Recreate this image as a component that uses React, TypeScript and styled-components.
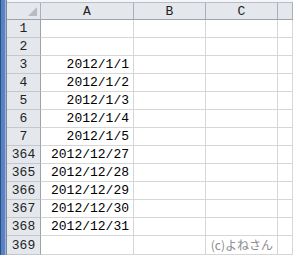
import React from "react";
import styled, { createGlobalStyle } from "styled-components";

const Global = createGlobalStyle`
  html, body { margin: 0; padding: 0; background: #ffffff; }
  body { width: 293px; height: 255px; overflow: hidden; }
  * { box-sizing: border-box; }
`;

const Frame = styled.div`
  display: flex;
  width: 293px;
  height: 255px;
  overflow: hidden;
  background: #ffffff;
`;

const BlueBar = styled.div`
  width: 7px;
  flex: none;
  background: linear-gradient(to right, #2c4f8c 0, #2c4f8c 1px, #5680c0 1px, #5a84c4 5px, #9db5da 5px, #9db5da 6px, #7d8796 6px);
`;

const Sheet = styled.div`
  flex: 1;
  display: flex;
  flex-direction: column;
  min-width: 0;
`;

const TopStrip = styled.div`
  height: 3px;
  background: #f3f5f8;
  border-bottom: 1px solid #b9bec6;
`;

const COLS = "34px 93px 72px 72px 1fr";

const HeaderRow = styled.div`
  display: grid;
  grid-template-columns: ${COLS};
  height: 17px;
`;

const ColHead = styled.div`
  background: #e4e7ec;
  border-right: 1px solid #a9b0ba;
  border-bottom: 1px solid #9da3ab;
  display: flex;
  align-items: center;
  justify-content: center;
  font-family: "Liberation Mono", monospace;
  font-size: 13px;
  color: #222;
  padding-top: 1px;
`;

const Corner = styled(ColHead)`
  position: relative;
  justify-content: flex-end;
  align-items: flex-end;
  padding: 0 3px 3px 0;
`;

const Row = styled.div`
  display: grid;
  grid-template-columns: ${COLS};
  height: 18px;
`;

const RowHead = styled.div`
  background: #e4e7ec;
  border-right: 1px solid #9da3ab;
  border-bottom: 1px solid #c3c8cf;
  display: flex;
  align-items: flex-end;
  justify-content: center;
  padding-bottom: 1px;
  font-family: "Liberation Mono", monospace;
  font-size: 13px;
  color: #222;
`;

const Cell = styled.div<{ $muted?: boolean }>`
  border-right: 1px solid #d6d6d6;
  border-bottom: 1px solid #d6d6d6;
  display: flex;
  align-items: flex-end;
  justify-content: flex-end;
  padding: 0 4px 1px 0;
  font-family: ${(p) => (p.$muted ? `"Noto Sans CJK JP", sans-serif` : `"Liberation Mono", monospace`)};
  font-size: ${(p) => (p.$muted ? "12px" : "13px")};
  color: ${(p) => (p.$muted ? "#8a8a8a" : "#000")};
  white-space: nowrap;
  overflow: visible;
`;

const rows: { n: string; a: string; c?: string }[] = [
  { n: "1", a: "" },
  { n: "2", a: "" },
  { n: "3", a: "2012/1/1" },
  { n: "4", a: "2012/1/2" },
  { n: "5", a: "2012/1/3" },
  { n: "6", a: "2012/1/4" },
  { n: "7", a: "2012/1/5" },
  { n: "364", a: "2012/12/27" },
  { n: "365", a: "2012/12/28" },
  { n: "366", a: "2012/12/29" },
  { n: "367", a: "2012/12/30" },
  { n: "368", a: "2012/12/31" },
  { n: "369", a: "", c: "(c)よねさん" },
];

export default function App() {
  return (
    <>
      <Global />
      <Frame>
        <BlueBar />
        <Sheet>
          <TopStrip />
          <HeaderRow>
            <Corner>
              <svg width="9" height="9" viewBox="0 0 9 9">
                <polygon points="9,0 9,9 0,9" fill="#b7bcc4" />
              </svg>
            </Corner>
            <ColHead>A</ColHead>
            <ColHead>B</ColHead>
            <ColHead>C</ColHead>
            <ColHead />
          </HeaderRow>
          {rows.map((r) => (
            <Row key={r.n}>
              <RowHead>{r.n}</RowHead>
              <Cell>{r.a}</Cell>
              <Cell />
              <Cell $muted>{r.c ?? ""}</Cell>
              <Cell />
            </Row>
          ))}
        </Sheet>
      </Frame>
    </>
  );
}
